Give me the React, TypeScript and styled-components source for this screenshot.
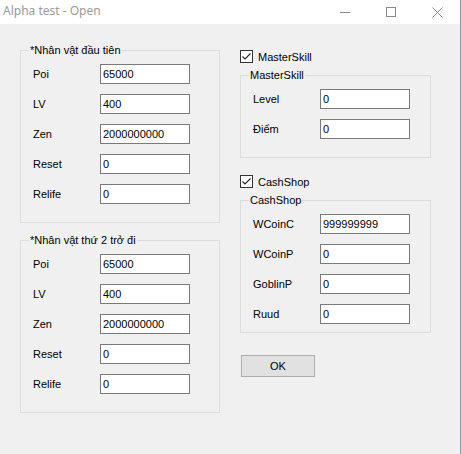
import React from "react";
import styled, { createGlobalStyle } from "styled-components";

const Global = createGlobalStyle`
  html, body { margin: 0; padding: 0; background: #8c9aa8; }
  body { font-family: "Liberation Sans", Arial, sans-serif; font-size: 11px; color: #000; }
`;

const Window = styled.div`
  width: 460px;
  height: 454px;
  background: #f0f0f0;
  display: flex;
  flex-direction: column;
`;

const TitleBar = styled.div`
  height: 24px;
  background: #fff;
  display: flex;
  align-items: center;
`;

const Title = styled.div`
  flex: 1;
  padding-left: 3px;
  font-family: "Noto Sans", "Open Sans", sans-serif;
  font-size: 12px;
  color: #9a9a9a;
  line-height: 24px;
  margin-top: -2px;
`;

const CaptionButton = styled.div`
  width: 46px;
  height: 24px;
  display: flex;
  align-items: center;
  justify-content: center;
  color: #8a8a8a;
`;

const Body = styled.div`
  display: flex;
  align-items: flex-start;
  padding: 20px 0 0 20px;
  gap: 20px;
`;

const Column = styled.div<{ $top?: number }>`
  display: flex;
  flex-direction: column;
  padding-top: ${(p) => p.$top ?? 0}px;
`;

const Group = styled.fieldset<{ $width: number; $padBottom: number; $mt?: number }>`
  box-sizing: border-box;
  width: ${(p) => p.$width}px;
  margin: ${(p) => p.$mt ?? 0}px 0 0 0;
  border: 1px solid #dcdcdc;
  padding: 7px 0 ${(p) => p.$padBottom}px 12px;
  display: grid;
  grid-template-columns: 67px 90px;
  row-gap: 10px;
  min-width: 0;
`;

const Legend = styled.legend`
  font-size: 11px;
  line-height: 13px;
  padding: 0 1px;
  margin-left: -4px;
`;

const Label = styled.label`
  display: flex;
  align-items: center;
  height: 20px;
  font-size: 11px;
`;

const TextBox = styled.div`
  box-sizing: border-box;
  width: 90px;
  height: 20px;
  border: 1px solid #7a7a7a;
  background: #fff;
  padding-left: 2px;
  display: flex;
  align-items: center;
  font-size: 11px;
`;

const CheckRow = styled.div<{ $mt?: number }>`
  display: flex;
  align-items: center;
  height: 17px;
  margin-top: ${(p) => p.$mt ?? 0}px;
  gap: 5px;
  font-size: 11px;
`;

const CheckBox = styled.div`
  box-sizing: border-box;
  width: 13px;
  height: 13px;
  border: 1px solid #333;
  background: #fff;
  display: flex;
  align-items: center;
  justify-content: center;
`;

const Button = styled.div`
  box-sizing: border-box;
  width: 74px;
  height: 22px;
  margin-top: 22px;
  margin-left: 1px;
  background: #e1e1e1;
  border: 1px solid #adadad;
  display: flex;
  align-items: center;
  justify-content: center;
  font-size: 11px;
`;

type Field = [string, string];

const CharFields: Field[] = [
  ["Poi", "65000"],
  ["LV", "400"],
  ["Zen", "2000000000"],
  ["Reset", "0"],
  ["Relife", "0"],
];

const Fields = ({ items }: { items: Field[] }) => (
  <>
    {items.map(([l, v]) => (
      <React.Fragment key={l}>
        <Label>{l}</Label>
        <TextBox>{v}</TextBox>
      </React.Fragment>
    ))}
  </>
);

const Check = () => (
  <CheckBox>
    <svg width="11" height="11" viewBox="0 0 11 11">
      <path d="M1.5 5.5 L4 8 L9.5 2.5" fill="none" stroke="#222" strokeWidth="1.1" />
    </svg>
  </CheckBox>
);

export default function App() {
  return (
    <>
      <Global />
      <Window>
        <TitleBar>
          <Title>Alpha test - Open</Title>
          <CaptionButton>
            <svg width="10" height="10" viewBox="0 0 10 10">
              <path d="M0 5.5 H10" stroke="#8a8a8a" strokeWidth="1" />
            </svg>
          </CaptionButton>
          <CaptionButton>
            <svg width="10" height="10" viewBox="0 0 10 10">
              <rect x="0.5" y="0.5" width="9" height="9" fill="none" stroke="#8a8a8a" strokeWidth="1" />
            </svg>
          </CaptionButton>
          <CaptionButton>
            <svg width="11" height="11" viewBox="0 0 11 11">
              <path d="M0.5 0.5 L10.5 10.5 M10.5 0.5 L0.5 10.5" stroke="#8a8a8a" strokeWidth="1" />
            </svg>
          </CaptionButton>
        </TitleBar>
        <Body>
          <Column>
            <Group $width={200} $padBottom={18}>
              <Legend>*Nhân vật đầu tiên</Legend>
              <Fields items={CharFields} />
            </Group>
            <Group $width={200} $padBottom={18} $mt={11}>
              <Legend>*Nhân vật thứ 2 trở đi</Legend>
              <Fields items={CharFields} />
            </Group>
          </Column>
          <Column $top={4}>
            <CheckRow>
              <Check />
              MasterSkill
            </CheckRow>
            <Group $width={191} $padBottom={18} $mt={4}>
              <Legend>MasterSkill</Legend>
              <Fields items={[["Level", "0"], ["Điểm", "0"]]} />
            </Group>
            <CheckRow $mt={15}>
              <Check />
              CashShop
            </CheckRow>
            <Group $width={191} $padBottom={8} $mt={4}>
              <Legend>CashShop</Legend>
              <Fields
                items={[
                  ["WCoinC", "999999999"],
                  ["WCoinP", "0"],
                  ["GoblinP", "0"],
                  ["Ruud", "0"],
                ]}
              />
            </Group>
            <Button>OK</Button>
          </Column>
        </Body>
      </Window>
    </>
  );
}
